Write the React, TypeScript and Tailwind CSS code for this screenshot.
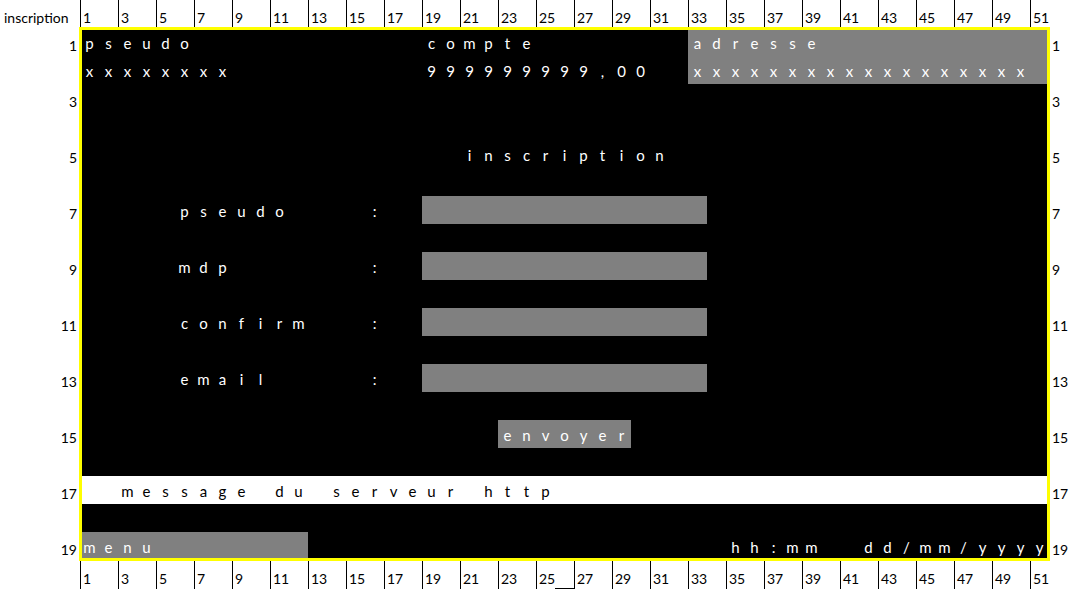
import React from 'react';

type Bg = 'b' | 'g' | 'w';
type Cell = { ch: string; bg: Bg };

const COLS = 51;

// builds one 51-cell line of the screen: background spans + texts placed by column (1-based)
const line = (spans: [number, number, Bg][], texts: [number, string][]): Cell[] => {
    const cells: Cell[] = Array.from({ length: COLS }, () => ({ ch: '', bg: 'b' as Bg }));
    spans.forEach(([from, to, bg]) => {
        for (let c = from; c <= to; c++) cells[c - 1].bg = bg;
    });
    texts.forEach(([col, text]) => {
        text.split('').forEach((ch, i) => {
            if (cells[col - 1 + i]) cells[col - 1 + i].ch = ch === ' ' ? '' : ch;
        });
    });
    return cells;
};

const empty = () => line([], []);

const screen: Cell[][] = [
    line([[33, 51, 'g']], [[1, 'pseudo'], [19, 'compte'], [33, 'adresse']]),
    line([[33, 51, 'g']], [[1, 'xxxxxxxx'], [19, '999999999,00'], [33, 'xxxxxxxxxxxxxxxxxx']]),
    empty(),
    empty(),
    line([], [[21, 'inscription']]),
    empty(),
    line([[19, 33, 'g']], [[6, 'pseudo'], [16, ':']]),
    empty(),
    line([[19, 33, 'g']], [[6, 'mdp'], [16, ':']]),
    empty(),
    line([[19, 33, 'g']], [[6, 'confirm'], [16, ':']]),
    empty(),
    line([[19, 33, 'g']], [[6, 'email'], [16, ':']]),
    empty(),
    line([[23, 29, 'g']], [[23, 'envoyer']]),
    empty(),
    line([[1, 51, 'w']], [[3, 'message du serveur http']]),
    empty(),
    line([[1, 12, 'g']], [[1, 'menu'], [35, 'hh:mm'], [42, 'dd/mm/yyyy']]),
];

const bgClass: Record<Bg, string> = {
    b: 'bg-black text-white',
    g: 'bg-[#808080] text-white',
    w: 'bg-white text-black',
};

const ColumnRuler: React.FC<{ bottom?: boolean }> = ({ bottom }) => (
    <div className={`flex ${bottom ? 'h-[29px]' : 'h-[28px]'}`}>
        <div className="w-[80px] flex items-end pl-[4px] pb-[3px] leading-[15px] text-black">
            {bottom ? '' : 'inscription'}
        </div>
        <div className="grid grid-cols-[repeat(51,19px)]">
            {Array.from({ length: COLS }, (_, i) => {
                const n = i + 1;
                const odd = n % 2 === 1;
                return (
                    <div
                        key={n}
                        className={`flex items-end pb-[3px] leading-[15px] text-black ${odd ? 'border-l border-black pl-[2px]' : ''} ${bottom && n === 26 ? 'border-b border-black' : ''}`}
                    >
                        {odd ? n : ''}
                    </div>
                );
            })}
        </div>
    </div>
);

export default function App() {
    return (
        <div className="w-[1077px] h-[589px] bg-white overflow-hidden font-['Lato',sans-serif] text-[14px] flex flex-col">
            <ColumnRuler />

            <div className="flex h-[532px]">
                {/* row numbers, left */}
                <div className="w-[80px] grid grid-rows-[repeat(19,28px)]">
                    {screen.map((_, r) => (
                        <div key={r} className="flex items-end justify-end pr-[3px] pb-[3px] leading-[15px] text-black">
                            {r % 2 === 0 ? r + 1 : ''}
                        </div>
                    ))}
                </div>

                <div className="relative grid grid-cols-[repeat(51,19px)] grid-rows-[repeat(19,28px)] bg-black">
                    {screen.map((row, r) =>
                        row.map((cell, c) => (
                            <div key={`${r}-${c}`} className={`flex items-center justify-center pt-[2px] text-[15px] leading-none ${bgClass[cell.bg]}`}>
                                {cell.ch}
                            </div>
                        ))
                    )}
                    <div className="absolute -inset-[1px] border-[3px] border-[#ffff00] pointer-events-none"></div>
                </div>

                {/* row numbers, right */}
                <div className="flex-1 grid grid-rows-[repeat(19,28px)]">
                    {screen.map((_, r) => (
                        <div key={r} className="flex items-end pl-[3px] pb-[3px] leading-[15px] text-black">
                            {r % 2 === 0 ? r + 1 : ''}
                        </div>
                    ))}
                </div>
            </div>

            <ColumnRuler bottom />
        </div>
    );
}
